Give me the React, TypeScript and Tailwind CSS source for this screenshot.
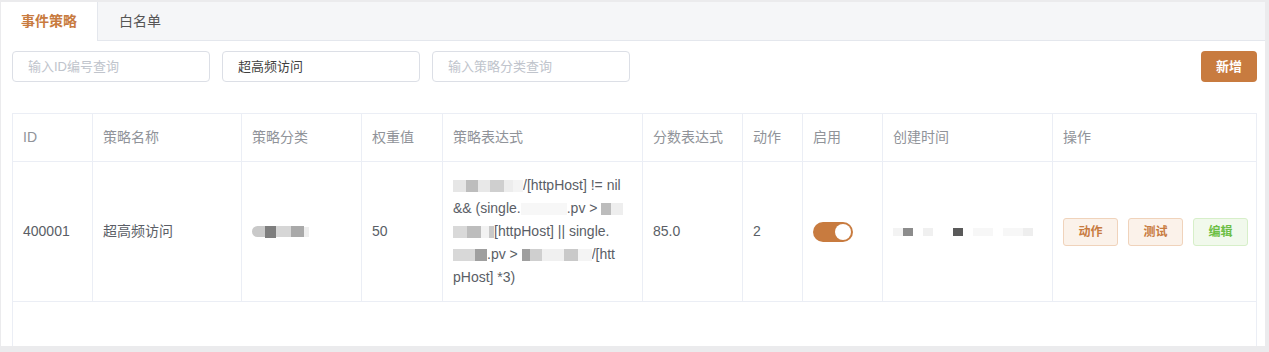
const font = { fontFamily: '"Liberation Sans", "Noto Sans CJK SC", sans-serif' };

const Blk: React.FC<{ w: number; c: string; h?: string }> = ({ w, c, h = 'h-[12px]' }) => (
  <span className={`inline-block align-middle blur-[0.6px] ${h}`} style={{ width: w, background: c }} />
);

const cols = 'grid grid-cols-[80px_149px_120px_81px_200px_100px_60px_80px_170px_205px]';
const headers = ['ID', '策略名称', '策略分类', '权重值', '策略表达式', '分数表达式', '动作', '启用', '创建时间', '操作'];

const App: React.FC = () => (
  <div className="h-[352px] w-[1269px] bg-[#ebebed] pt-[2px] pl-[1px] pr-[4px] pb-[6px]" style={font}>
    <div className="flex h-full flex-col bg-white">
      {/* tabs */}
      <div className="flex h-[39px] shrink-0 border-b border-[#e4e7ed] bg-[#f5f6f8]">
        <div className="-mb-px flex w-[97px] items-center justify-center border-r border-[#e4e7ed] bg-white text-[14px] font-bold text-[#c87b3f]">事件策略</div>
        <div className="flex items-center px-[21px] text-[14px] text-[#555]">白名单</div>
      </div>

      <div className="flex flex-1 flex-col pl-[11px] pr-[8px] pt-[10px]">
        {/* filters */}
        <div className="flex items-center gap-3">
          <div className="flex h-[31px] w-[198px] items-center rounded border border-[#dcdfe6] px-[15px] text-[13px] text-[#c0c4cc]">输入ID编号查询</div>
          <div className="flex h-[31px] w-[198px] items-center rounded border border-[#dcdfe6] px-[15px] text-[13px] text-[#3f3f3f]">超高频访问</div>
          <div className="flex h-[31px] w-[198px] items-center rounded border border-[#dcdfe6] px-[15px] text-[13px] text-[#c0c4cc]">输入策略分类查询</div>
          <button className="ml-auto flex h-[31px] w-[56px] items-center justify-center rounded bg-[#c87b3f] text-[13px] font-semibold text-white">新增</button>
        </div>

        {/* table */}
        <div className="mt-[31px] flex-1 border-x border-t border-[#ebeef5] text-[14px]">
          <div className={`${cols} h-[48px] border-b border-[#ebeef5] text-[#909399]`}>
            {headers.map((h, i) => (
              <div key={h} className={`flex items-center px-[10px] ${i < 9 ? 'border-r border-[#ebeef5]' : ''}`}>{h}</div>
            ))}
          </div>
          <div className={`${cols} h-[140px] border-b border-[#ebeef5] text-[#5a5e66]`}>
            <div className="flex items-center border-r border-[#ebeef5] px-[10px]">400001</div>
            <div className="flex items-center border-r border-[#ebeef5] px-[10px]">超高频访问</div>
            <div className="flex items-center border-r border-[#ebeef5] px-[10px]">
              <Blk w={13} c="#c9c9c9" h="h-[11px] rounded-l-full" />
              <Blk w={11} c="#7e7e7e" h="h-[12px]" />
              <Blk w={15} c="#d6d6d6" h="h-[11px]" />
              <Blk w={13} c="#a9a9a9" h="h-[11px]" />
              <Blk w={5} c="#eeeeee" h="h-[10px]" />
            </div>
            <div className="flex items-center border-r border-[#ebeef5] px-[10px]">50</div>
            <div className="flex flex-col justify-center border-r border-[#ebeef5] px-[10px] leading-[23px] whitespace-nowrap">
              <div>
                <Blk w={13} c="#e6e6e6" /><Blk w={12} c="#bdbdbd" /><Blk w={12} c="#e8e8e8" /><Blk w={14} c="#cfcfcf" /><Blk w={9} c="#ededed" /><Blk w={10} c="#f4f4f4" />
                <span>/[httpHost] != nil</span>
              </div>
              <div>
                <span>&amp;&amp; (single.</span><Blk w={46} c="#f7f7f7" /><span>.pv &gt; </span><Blk w={10} c="#bcbcbc" /><Blk w={12} c="#eeeeee" />
              </div>
              <div>
                <Blk w={14} c="#d9d9d9" /><Blk w={14} c="#bdbdbd" /><Blk w={8} c="#f2f2f2" /><Blk w={5} c="#c9c9c9" />
                <span>[httpHost] || single.</span>
              </div>
              <div>
                <Blk w={22} c="#d8d8d8" /><Blk w={12} c="#9f9f9f" /><span>.pv &gt; </span><Blk w={8} c="#9f9f9f" /><Blk w={12} c="#cfcfcf" /><Blk w={22} c="#f0f0f0" /><Blk w={14} c="#c9c9c9" /><Blk w={14} c="#f4f4f4" />
                <span>/[htt</span>
              </div>
              <div>pHost] *3)</div>
            </div>
            <div className="flex items-center border-r border-[#ebeef5] px-[10px]">85.0</div>
            <div className="flex items-center border-r border-[#ebeef5] px-[10px]">2</div>
            <div className="flex items-center border-r border-[#ebeef5] px-[10px]">
              <div className="flex h-[20px] w-[40px] items-center justify-end rounded-full bg-[#c87b3f] pr-[2px]">
                <span className="h-[16px] w-[16px] rounded-full bg-white" />
              </div>
            </div>
            <div className="flex items-center gap-0 border-r border-[#ebeef5] px-[10px]">
              <Blk w={10} c="#f3f3f3" h="h-[8px]" /><Blk w={10} c="#8c8c8c" h="h-[8px]" /><span className="w-[10px]" /><Blk w={10} c="#f0f0f0" h="h-[8px]" />
              <span className="w-[20px]" /><Blk w={10} c="#5a5a5a" h="h-[8px]" /><span className="w-[10px]" /><Blk w={20} c="#f7f7f7" h="h-[8px]" />
              <span className="w-[10px]" /><Blk w={20} c="#f7f7f7" h="h-[8px]" /><Blk w={10} c="#eeeeee" h="h-[8px]" />
            </div>
            <div className="flex items-center gap-[10px] px-[10px]">
              <button className="flex h-[28px] w-[56px] items-center justify-center rounded-[3px] border border-[#f0d3bb] bg-[#fbf2ea] text-[12px] font-bold text-[#c87b3f]">动作</button>
              <button className="flex h-[28px] w-[56px] items-center justify-center rounded-[3px] border border-[#f0d3bb] bg-[#fbf2ea] text-[12px] font-bold text-[#c87b3f]">测试</button>
              <button className="flex h-[28px] w-[56px] items-center justify-center rounded-[3px] border border-[#d7efc9] bg-[#f1f9ec] text-[12px] font-bold text-[#6cbf45]">编辑</button>
            </div>
          </div>
        </div>
      </div>
    </div>
  </div>
);

export default App;
